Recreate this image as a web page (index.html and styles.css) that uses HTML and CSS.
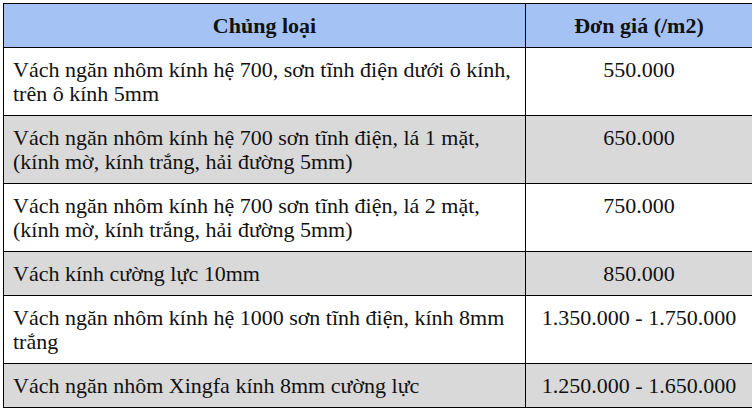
FILE: index.html
```html
<!DOCTYPE html>
<html lang="vi">
<head>
<meta charset="utf-8">
<link rel="stylesheet" href="styles.css">
</head>
<body>
<table class="price-table">
  <colgroup><col class="c1"><col class="c2"></colgroup>
  <thead>
    <tr><th>Chủng loại</th><th>Đơn giá (/m2)</th></tr>
  </thead>
  <tbody>
    <tr><td>Vách ngăn nhôm kính hệ 700, sơn tĩnh điện dưới ô kính, trên ô kính 5mm</td><td class="price">550.000</td></tr>
    <tr class="alt"><td>Vách ngăn nhôm kính hệ 700 sơn tĩnh điện, lá 1 mặt, (kính mờ, kính trắng, hải đường 5mm)</td><td class="price">650.000</td></tr>
    <tr><td>Vách ngăn nhôm kính hệ 700 sơn tĩnh điện, lá 2 mặt, (kính mờ, kính trắng, hải đường 5mm)</td><td class="price">750.000</td></tr>
    <tr class="alt"><td>Vách kính cường lực 10mm</td><td class="price">850.000</td></tr>
    <tr><td>Vách ngăn nhôm kính hệ 1000 sơn tĩnh điện, kính 8mm trắng</td><td class="price">1.350.000 - 1.750.000</td></tr>
    <tr class="alt"><td>Vách ngăn nhôm Xingfa kính 8mm cường lực</td><td class="price">1.250.000 - 1.650.000</td></tr>
  </tbody>
</table>
</body>
</html>
```
FILE: styles.css
```css
html, body { background: #ffffff; }
body {
  margin: 3px;
  font-family: "Liberation Serif", "Times New Roman", serif;
  font-size: 22px;
  line-height: 24px;
  color: #111;
}
.price-table {
  border-collapse: collapse;
  width: 749px;
  table-layout: fixed;
}
.c1 { width: 522px; }
.c2 { width: 227px; }
.price-table th,
.price-table td {
  border: 1px solid #000;
  padding: 10px 9px 9px 9px;
  vertical-align: top;
  text-align: left;
}
.price-table th {
  background: #a4c2f4;
  font-weight: bold;
  text-align: center;
}
.price-table td.price { text-align: center; }
.price-table tr.alt td { background: #d9d9d9; }
```
